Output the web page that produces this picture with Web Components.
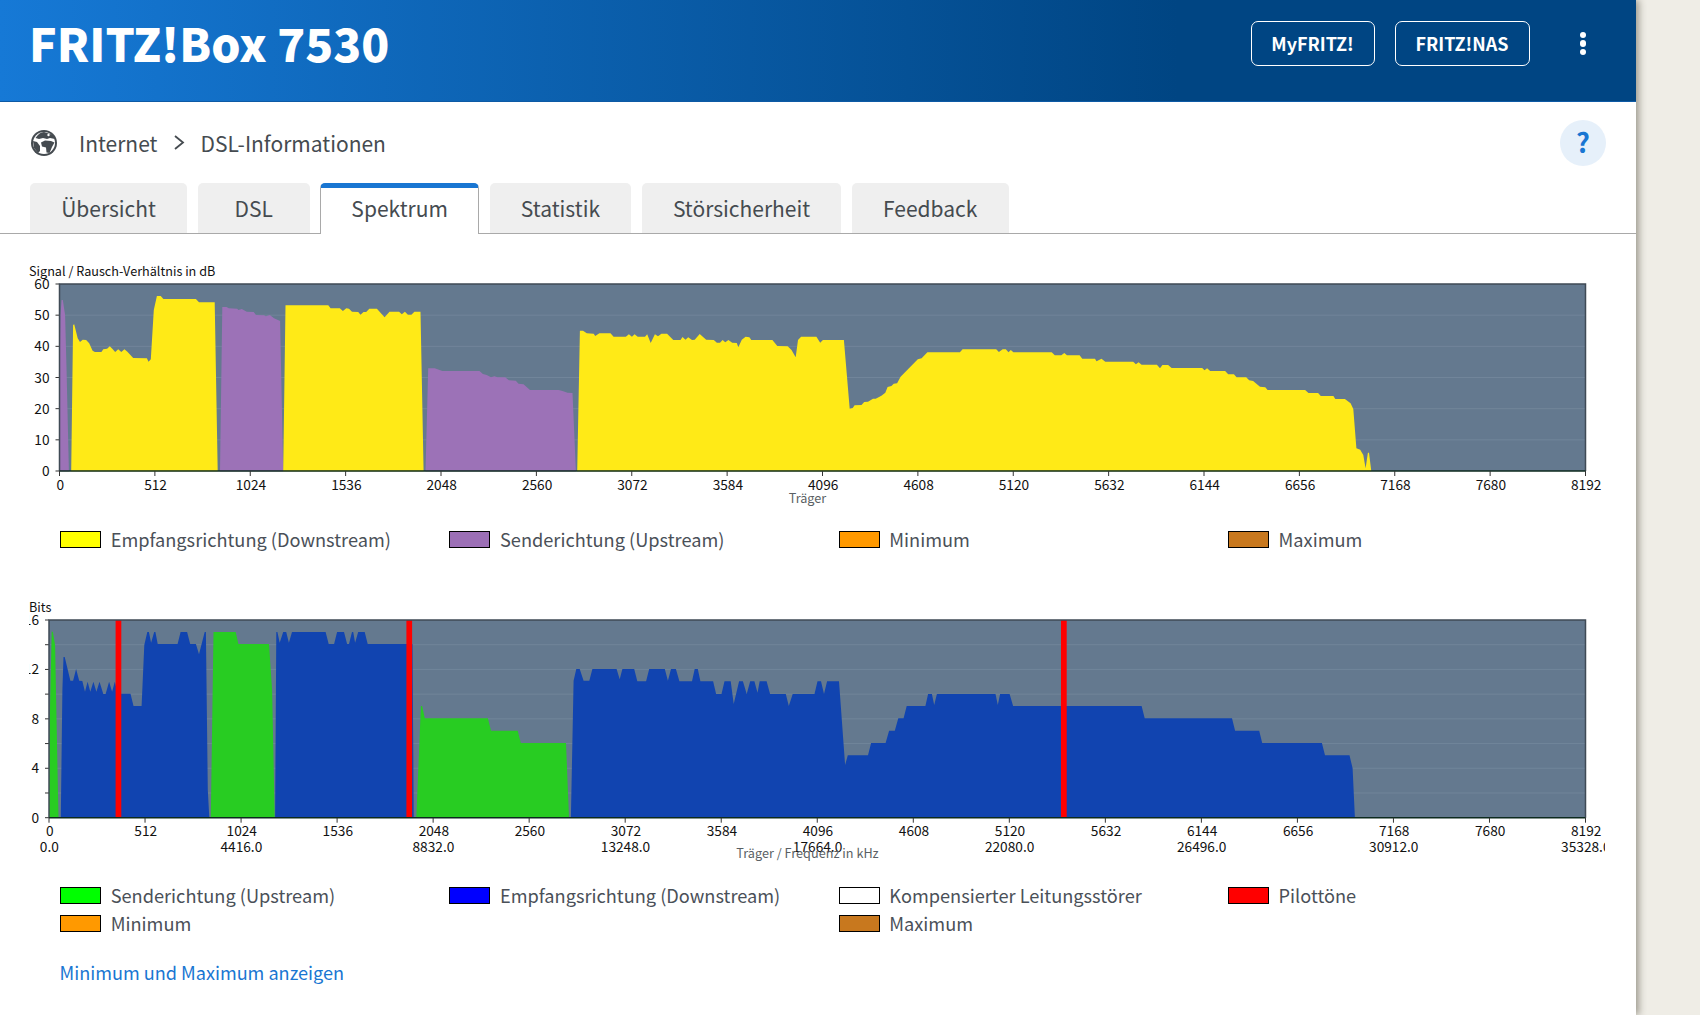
<!DOCTYPE html>
<html lang="de">
<head>
<meta charset="utf-8">
<title>FRITZ!Box 7530</title>
<style>
  html, body { margin: 0; padding: 0; height: 100%; overflow: hidden; }
  body {
    background: #efede6;
    font-family: "Noto Sans CJK SC", "Source Sans Pro", "Liberation Sans", sans-serif;
    color: #454b50;
  }
</style>
</head>
<body>
<fritz-page>
  <fritz-header slot="top" title-text="FRITZ!Box 7530"></fritz-header>
  <fritz-breadcrumb></fritz-breadcrumb>
  <fritz-tabs></fritz-tabs>

  <spectrum-chart kind="snr"></spectrum-chart>
  <chart-legend class="first">
    <legend-item color="#ffff00">Empfangsrichtung (Downstream)</legend-item>
    <legend-item color="#9c6fb6">Senderichtung (Upstream)</legend-item>
    <legend-item color="#ff9900">Minimum</legend-item>
    <legend-item color="#c8781e">Maximum</legend-item>
  </chart-legend>

  <spectrum-chart kind="bits"></spectrum-chart>
  <chart-legend class="second">
    <legend-item color="#00ff00">Senderichtung (Upstream)</legend-item>
    <legend-item color="#0000ff">Empfangsrichtung (Downstream)</legend-item>
    <legend-item color="#ffffff">Kompensierter Leitungsstörer</legend-item>
    <legend-item color="#ff0000">Pilottöne</legend-item>
    <legend-item color="#ff9900">Minimum</legend-item>
    <legend-item color="#c8781e" column="3">Maximum</legend-item>
  </chart-legend>

  <min-max-link>Minimum und Maximum anzeigen</min-max-link>
</fritz-page>

<script>
"use strict";

const FONT = `"Noto Sans CJK SC", "Source Sans Pro", "Liberation Sans", sans-serif`;

class FritzPage extends HTMLElement {
    constructor(){
        super();
        this.attachShadow({mode : 'open'});
        this.shadowRoot.innerHTML = `
            <style>
                :host {
                    display: block;
                    width: 1636px;
                    height: 1015px;
                    overflow: hidden;
                    background: #fff;
                    box-shadow: 3px 0 7px rgba(60, 55, 40, .45);
                }
            </style>
            <slot name="top"></slot>
            <slot></slot>
        `;
    }
}

class FritzHeader extends HTMLElement {
    constructor(){
        super();
        this.attachShadow({mode : 'open'});
        this.shadowRoot.innerHTML = `
            <style>
                :host {
                    display: flex;
                    align-items: center;
                    box-sizing: border-box;
                    height: 102px;
                    padding: 0 0 14px 29px;
                    background: linear-gradient(90deg, #1679d6 0%, #004583 72%, #004583 100%);
                    border-bottom: 1px solid #0d5aa5;
                    color: #fff;
                    font-family: ${FONT};
                }
                h1 {
                    flex: 1;
                    margin: 0 0 3px 0;
                    font-size: 46px;
                    line-height: 60px;
                    font-weight: 900;
                }
                a {
                    box-sizing: border-box;
                    height: 45px;
                    margin-right: 20px;
                    border: 1.5px solid #fff;
                    border-radius: 7px;
                    font-size: 18px;
                    line-height: 42px;
                    font-weight: 600;
                    text-align: center;
                }
                .myfritz { width: 124px; }
                .nas { width: 135px; }
                .dots {
                    display: flex;
                    flex-direction: column;
                    gap: 2px;
                    margin: 0 50px 0 30px;
                }
                .dots i {
                    width: 6.5px;
                    height: 6.5px;
                    border-radius: 50%;
                    background: #fff;
                }
            </style>
            <h1>${this.getAttribute("title-text")}</h1>
            <a class="myfritz">MyFRITZ!</a>
            <a class="nas">FRITZ!NAS</a>
            <div class="dots"><i></i><i></i><i></i></div>
        `;
    }
}

class FritzBreadcrumb extends HTMLElement {
    constructor(){
        super();
        this.attachShadow({mode : 'open'});
        this.shadowRoot.innerHTML = `
            <style>
                :host {
                    display: flex;
                    align-items: center;
                    box-sizing: border-box;
                    height: 81px;
                    padding: 0 30px 0 30px;
                    font-family: ${FONT};
                    font-size: 21px;
                    line-height: 30px;
                    color: #454b50;
                }
                svg.globe { width: 28px; height: 28px; margin-right: 21px; }
                svg.chev { width: 12px; height: 15px; margin: 0 15px 0 16px; }
                .grow { flex: 1; }
                .help {
                    width: 46px;
                    height: 46px;
                    border-radius: 50%;
                    background: #e6f0fa;
                    color: #1976d2;
                    font-size: 27px;
                    line-height: 44px;
                    font-weight: 700;
                    text-align: center;
                }
            </style>
            <svg class="globe" viewBox="0 0 28 28">
                <circle cx="14" cy="14" r="13" fill="#454b50"/>
                <circle cx="14" cy="14" r="11" fill="#fff"/>
                <path fill="#454b50" d="M5.500 9C8 5 11 3 14 3l9 3 2 4-5-1-3 1-4-1-4 1z"/>
                <circle cx="18.500" cy="6" r="1.200" fill="#fff"/>
                <path fill="#454b50" d="M11 13.500l4-2 6 .5 3.500 1.500-2.500 4.500-2.500 6-3-.5-.5-5-4-1z"/>
                <path fill="#454b50" d="M3 12l4 1 3 4v5l-2 2-4-5z"/>
            </svg>
            <span>Internet</span>
            <svg class="chev" viewBox="0 0 12 15"><path d="M2 1l8 6.500-8 6.500" fill="none" stroke="#454b50" stroke-width="1.800"/></svg>
            <span>DSL-Informationen</span>
            <span class="grow"></span>
            <span class="help">?</span>
        `;
    }
}

class FritzTabs extends HTMLElement {
    constructor(){
        super();
        this.attachShadow({mode : 'open'});
        const tabs = ["Übersicht", "DSL", "Spektrum", "Statistik", "Störsicherheit", "Feedback"];
        const items = tabs.map(t => `<a class="${t === "Spektrum" ? "active" : ""}">${t}</a>`).join("");
        this.shadowRoot.innerHTML = `
            <style>
                :host {
                    display: flex;
                    gap: 10.5px;
                    box-sizing: border-box;
                    height: 51px;
                    padding-left: 30px;
                    border-bottom: 1px solid #a9a9a9;
                    font-family: ${FONT};
                    font-size: 21px;
                    color: #454b50;
                }
                a {
                    box-sizing: border-box;
                    min-width: 112px;
                    height: 50px;
                    padding: 0 31.2px;
                    background: #efefef;
                    border-radius: 5px 5px 0 0;
                    line-height: 50px;
                    text-align: center;
                }
                a.active {
                    height: 51px;
                    padding: 0 30.2px;
                    background: #fff;
                    border: 1px solid #a9a9a9;
                    border-top: 5px solid #1976d2;
                    border-bottom: 0;
                    line-height: 40px;
                }
            </style>
            ${items}
        `;
    }
}

const toPx = (offset, top, pts) => pts.trim().split(/\s+/).map(p => {
    const [x, y] = p.split(",").map(Number);
    return [offset + x / 2.6133, top + y / 3];
});

const CHARTS = {
    snr : {
        title : "Signal / Rausch-Verhältnis in dB",
        axis : "Träger",
        height : 252,
        top : 258,
        marginTop : 24,
        plot : { left : 59.5, right : 1585.5, top : 284, bottom : 471 },
        yLabels : ["60", "50", "40", "30", "20", "10", "0"],
        gridRows : 6,
        minorEvery : 1,
        ticksX : 485,
        titleY : 271,
        axisY : 498,
        series : [
            { fill : "#9c72b7", pts : toPx(0, 255, "155,649 155,400 158,180 161,135 164,135 170,180 174,350 180,649") },
            { fill : "#ffea17", pts : toPx(0, 255, "186,649 191,210 194,208 203,250 209,261 216,254 225,255 233,265 242,287 248,291 265,291 270,283 280,281 287,274 294,282 301,291 309,283 317,291 325,283 333,290 348,309 384,310 388,320 394,313 402,165 410,123 420,123 427,132 512,132 520,142 561,142 569,649") },
            { fill : "#9c72b7", pts : toPx(0, 255, "575,649 581,156 592,156 598,160 620,161 623,165 632,162 645,170 663,171 669,180 690,181 695,184 705,180 716,190 732,198 740,649") },
            { fill : "#ffea17", pts : toPx(0, 255, "740,649 746,151 858,151 864,160 888,160 896,168 905,160 912,161 920,170 936,171 942,179 950,171 957,171 965,161 985,161 1005,187 1018,170 1043,170 1050,178 1058,170 1066,179 1075,179 1083,170 1099,170 1107,649") },
            { fill : "#9c72b7", pts : toPx(0, 255, "1112,649 1119,340 1136,340 1156,348 1253,348 1262,357 1272,360 1283,367 1292,364 1300,367 1320,367 1330,376 1348,377 1355,386 1368,388 1385,405 1460,405 1470,408 1483,413 1496,414 1505,649") },
            { fill : "#ffea17", pts : [
                ...toPx(560, 255, "45,649 52,227 60,227 70,235 88,236 92,243 103,235 132,235 140,245 172,245 180,238 188,245 195,238 203,245 222,245 228,238 237,264 248,238 256,244 265,236 280,236 296,255 315,255 320,246 328,254 335,247 345,255 352,254 365,237 382,254 402,255 410,263 418,263 425,255 432,262 440,255 450,263 462,264 466,277 475,254 485,245 495,247 500,255 555,255 568,273 595,274 605,285 616,307 622,255 630,245 670,245 680,263 687,255 742,255 757,461 765,459 770,451 788,450 795,441 805,440 818,431 825,431 840,422 850,413 856,396 866,393 872,386 881,385 890,365 935,313 945,310 960,292 1045,292 1052,283 1140,283 1147,291 1157,283 1165,283 1172,292 1178,285 1185,292 1285,292 1293,301 1310,301 1318,294 1325,301 1358,301 1365,311 1398,311 1402,319 1415,311 1425,320 1498,320 1505,328 1512,322 1520,329 1560,329 1568,340"),
                ...toPx(1100, 255, "163,330 178,330 187,339 267,339 273,346 280,340 288,348 327,348 335,358 350,358 357,367 382,367 390,376 400,378 418,395 432,397 438,405 536,405 545,414 570,414 577,423 610,423 615,432 640,432 655,445 662,462 670,580 680,584 688,600 694,640 700,593 703,593 709,649")
            ] }
        ]
    },
    bits : {
        title : "Bits",
        axis : "Träger / Frequenz in kHz",
        height : 267,
        top : 595,
        marginTop : 0,
        plot : { left : 49, right : 1585.5, top : 620, bottom : 817.700 },
        yLabels : ["16", "12", "8", "4", "0"],
        gridRows : 8,
        minorEvery : 2,
        ticksX : 831,
        freqY : 846.500,
        titleY : 607,
        axisY : 853,
        series : [
            { fill : "#28cc22", pts : toPx(0, 590, "128,683 130,400 135,125 138,125 144,165 148,400 153,683") },
            { fill : "#1144b0", pts : toPx(0, 590, "159,683 163,300 166,201 169,201 184,272 191,272 199,237 207,272 215,273 222,305 229,275 236,305 244,275 252,305 260,275 270,312 276,312 285,275 293,305 300,275 308,311 341,311 349,348 370,348 377,165 385,126 389,126 395,158 403,126 406,126 412,162 464,162 472,126 489,126 497,162 512,162 520,193 535,126 538,126 543,600 547,683") },
            { fill : "#28cc22", pts : toPx(0, 590, "551,683 558,126 616,126 623,162 703,162 711,300 718,683") },
            { fill : "#1144b0", pts : toPx(0, 590, "719,683 722,126 725,126 731,158 740,126 748,126 755,158 763,126 851,126 859,162 873,162 881,126 899,126 907,162 912,162 920,126 923,126 928,158 936,126 953,126 961,162 1078,162 1081,683") },
            { fill : "#28cc22", pts : toPx(0, 590, "1088,683 1100,348 1103,348 1110,385 1275,385 1283,422 1353,422 1361,459 1479,459 1487,683") },
            { fill : "#1144b0", pts : [
                ...toPx(0, 590, "1492,683 1499,272 1506,237 1515,237 1525,272 1540,272 1548,237"),
                ...toPx(560, 590, "148,237 156,268 163,237 194,237 202,274 225,274 233,237 274,237 282,272 290,237 303,237 312,274 345,274 352,237 360,237 367,274 400,274 408,312 422,312 430,274 446,274 454,342 468,274 478,274 488,312 497,274 508,274 516,308 522,274 540,274 549,312 590,312 598,348 608,312 665,312 673,274 682,274 690,312 698,274 729,274 745,525 752,496 805,496 813,459 851,459 860,422 875,422 884,385 898,385 906,348 955,348 962,312 972,312 978,345 985,312 1138,312 1144,345 1150,312 1175,312 1184,348 1520,348 1528,385"),
                ...toPx(1100, 590, "345,385 353,422 416,422 424,459 580,459 588,496 652,496 660,535 666,683")
            ] }
        ],
        pilots : [115.600, 406.400, 1061],
        freqs : ["0.0", "4416.0", "8832.0", "13248.0", "17664.0", "22080.0", "26496.0", "30912.0", "35328.0"]
    }
};

class SpectrumChart extends HTMLElement {
    constructor(){
        super();
        this.attachShadow({mode : 'open'});
        this.originX = 29;
    }

    getGrid(cfg){
        const { plot, gridRows, minorEvery, yLabels } = cfg;
        const ox = this.originX;
        const rowH = (plot.bottom - plot.top) / gridRows;
        let out = "";
        for (let i = 0; i <= gridRows; i++) {
            const y = plot.top - cfg.top + i * rowH;
            if (i > 0 && i < gridRows) {
                out += `<line x1="${plot.left - ox}" x2="${plot.right - ox}" y1="${y}" y2="${y}" stroke="#71859a"/>`;
            }
            out += `<line x1="${plot.left - ox - 4}" x2="${plot.left - ox}" y1="${y}" y2="${y}" stroke="#333"/>`;
            if (i % minorEvery === 0) {
                const label = yLabels[i / minorEvery];
                out += `<text class="num" x="${plot.left - ox - 10}" y="${y + 5}" text-anchor="end">${label}</text>`;
            }
        }
        return out;
    }

    getXAxis(cfg){
        const { plot } = cfg;
        const ox = this.originX;
        const step = (plot.right - plot.left) / 16;
        const base = plot.bottom - cfg.top;
        let out = "";
        for (let i = 0; i <= 16; i++) {
            const x = plot.left - ox + i * step;
            out += `<line x1="${x}" x2="${x}" y1="${base}" y2="${base + 5}" stroke="#333"/>`;
            out += `<text class="num" x="${x + 0.7}" y="${cfg.ticksX - cfg.top + 5}" text-anchor="middle">${i * 512}</text>`;
            if (cfg.freqs && i % 2 === 0) {
                out += `<text class="num" x="${x + 0.3}" y="${cfg.freqY - cfg.top + 5}" text-anchor="middle">${cfg.freqs[i / 2]}</text>`;
            }
        }
        return out;
    }

    getSeries(cfg){
        const ox = this.originX;
        let out = cfg.series.map(s => {
            const pts = s.pts.map(([x, y]) => `${(x - ox).toFixed(1)},${(y - cfg.top).toFixed(1)}`).join(" ");
            return `<polygon points="${pts}" fill="${s.fill}"/>`;
        }).join("");
        (cfg.pilots || []).forEach(x => {
            out += `<rect x="${x - ox}" y="${cfg.plot.top - cfg.top}" width="5.700" height="${cfg.plot.bottom - cfg.plot.top}" fill="#ff0000"/>`;
        });
        return out;
    }

    render(){
        const cfg = CHARTS[this.getAttribute("kind")];
        const { plot } = cfg;
        const ox = this.originX;
        const left = plot.left - ox, w = plot.right - plot.left;
        const top = plot.top - cfg.top, h = plot.bottom - plot.top;
        this.shadowRoot.innerHTML = `
            <style>
                :host {
                    display: block;
                    width: 1576px;
                    height: ${cfg.height}px;
                    margin: ${cfg.marginTop}px 0 0 ${ox}px;
                    overflow: hidden;
                    font-family: ${FONT};
                }
                svg { display: block; overflow: hidden; }
                text { font-family: ${FONT}; fill: #111; }
                .num { font-size: 13.700px; }
                .title { font-size: 12.650px; }
                .axis { font-size: 12.700px; fill: #5a5f64; }
            </style>
            <svg width="1576" height="${cfg.height}" viewBox="0 0 1576 ${cfg.height}">
                <rect x="${left}" y="${top}" width="${w}" height="${h}" fill="#64798f"/>
                ${this.getGrid(cfg)}
                ${this.getSeries(cfg)}
                <path d="M${left} ${top + h}V${top}H${left + w}V${top + h}" fill="none" stroke="#3f4a55" stroke-width="1.500"/>
                <line x1="${left}" x2="${left + w}" y1="${top + h}" y2="${top + h}" stroke="#0c2a1e" stroke-width="1.500"/>
                ${this.getXAxis(cfg)}
                <text class="title" x="0" y="${cfg.titleY - cfg.top + 5}">${cfg.title}</text>
                <text class="axis" x="${807.5 - ox}" y="${cfg.axisY - cfg.top + 5}" text-anchor="middle">${cfg.axis}</text>
            </svg>
        `;
    }

    connectedCallback(){
        this.render();
    }
}

class ChartLegend extends HTMLElement {
    constructor(){
        super();
        this.attachShadow({mode : 'open'});
        const second = this.classList.contains("second");
        this.shadowRoot.innerHTML = `
            <style>
                :host {
                    display: grid;
                    grid-template-columns: repeat(4, 389.300px);
                    grid-auto-rows: 28px;
                    align-content: start;
                    margin-left: 60px;
                    padding-top: ${second ? 19 : 15}px;
                    height: ${second ? 74 : 70}px;
                }
            </style>
            <slot></slot>
        `;
    }
}

class LegendItem extends HTMLElement {
    constructor(){
        super();
        this.attachShadow({mode : 'open'});
        const col = this.getAttribute("column");
        this.shadowRoot.innerHTML = `
            <style>
                :host {
                    display: flex;
                    align-items: center;
                    height: 28px;
                    ${col ? `grid-column: ${col};` : ""}
                    font-family: ${FONT};
                    font-size: 18.200px;
                    line-height: 28px;
                    color: #4a5058;
                }
                i {
                    box-sizing: border-box;
                    width: 41px;
                    height: 17px;
                    margin-right: 9.700px;
                    border: 1.500px solid #000;
                    background: ${this.getAttribute("color")};
                }
            </style>
            <i></i><span><slot></slot></span>
        `;
    }
}

class MinMaxLink extends HTMLElement {
    constructor(){
        super();
        this.attachShadow({mode : 'open'});
        this.shadowRoot.innerHTML = `
            <style>
                :host {
                    display: block;
                    margin: 0 0 0 59.500px;
                    padding-top: 3px;
                    font-family: ${FONT};
                    font-size: 18.100px;
                    line-height: 28px;
                    color: #1976d2;
                }
            </style>
            <slot></slot>
        `;
    }
}

customElements.define("fritz-page", FritzPage);
customElements.define("fritz-header", FritzHeader);
customElements.define("fritz-breadcrumb", FritzBreadcrumb);
customElements.define("fritz-tabs", FritzTabs);
customElements.define("spectrum-chart", SpectrumChart);
customElements.define("chart-legend", ChartLegend);
customElements.define("legend-item", LegendItem);
customElements.define("min-max-link", MinMaxLink);
</script>
</body>
</html>
